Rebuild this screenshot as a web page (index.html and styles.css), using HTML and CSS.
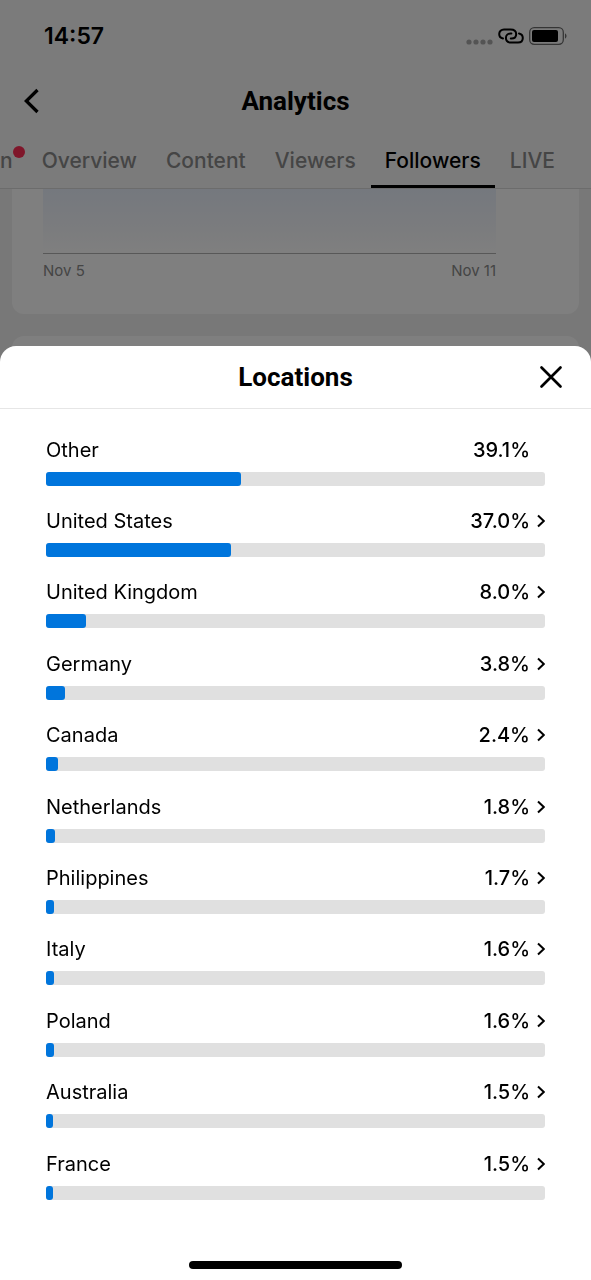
FILE: index.html
```html
<!DOCTYPE html>
<html lang="en">
<head>
<meta charset="utf-8">
<meta name="viewport" content="width=device-width, initial-scale=1">
<title>Analytics</title>
<link rel="stylesheet" href="styles.css">
</head>
<body>
<div class="page">
  <div class="status">
    <time class="clock">14:57</time>
    <div class="status-icons">
      <svg width="27" height="6" viewBox="0 0 27 6" fill="#a9a9a9"><circle cx="3" cy="3" r="2.6"/><circle cx="10" cy="3" r="2.6"/><circle cx="17" cy="3" r="2.6"/><circle cx="24" cy="3" r="2.6"/></svg>
      <svg width="26" height="16" viewBox="0 0 26 16" fill="none" stroke="#000" stroke-width="2" stroke-linecap="round"><path d="M5 10.500C2.600 10 1.200 8.200 1.200 6C1.200 3.200 3.200 1.400 6 1.400H12.500C16 1.400 18.200 3.300 18.200 6C18.200 8.800 16.200 10.600 13.500 10.600H12.800"/><path d="M21 5.500C23.400 6 24.800 7.800 24.800 10C24.800 12.800 22.800 14.600 20 14.600H13.500C10 14.600 7.900 12.800 7.900 10C7.900 7.300 9.900 5.400 12.600 5.400H13.400"/></svg>
      <svg width="38" height="18" viewBox="0 0 38 18"><rect x="0.700" y="0.700" width="33.600" height="16.600" rx="4.500" fill="none" stroke="#6b6b6b" stroke-width="1.300"/><rect x="3" y="3" width="26" height="12" rx="2"/><path d="M36 6.500v5c1-.3 1.500-1.300 1.500-2.500S37 6.800 36 6.500z" fill="#6b6b6b"/></svg>
    </div>
  </div>
  <header class="topbar">
    <button class="icon-button" aria-label="Back"><svg width="16" height="26" viewBox="0 0 16 26" fill="none" stroke="#000" stroke-width="3.300"><path d="M13.500 2L2.300 13L13.500 24"/></svg></button>
    <h1 class="title">Analytics</h1>
  </header>
  <nav class="tabs" role="tablist">
    <button class="tab tab-cut" role="tab"><span class="notify">n<span class="dot"></span></span></button>
    <button class="tab" role="tab">Overview</button>
    <button class="tab" role="tab">Content</button>
    <button class="tab" role="tab">Viewers</button>
    <button class="tab tab-active" role="tab" aria-selected="true">Followers</button>
    <button class="tab" role="tab">LIVE</button>
  </nav>
  <main class="content">
    <section class="card chart-card">
      <div class="chart"></div>
      <div class="axis"><span>Nov 5</span><span>Nov 11</span></div>
    </section>
    <section class="card next-card"></section>
  </main>
</div>

<div class="overlay">
  <section class="sheet" role="dialog" aria-labelledby="sheet-title">
    <header class="sheet-head">
      <h2 class="title" id="sheet-title">Locations</h2>
      <button class="icon-button close" aria-label="Close"><svg width="24" height="24" viewBox="0 0 24 24" fill="none" stroke="#000" stroke-width="2.700" stroke-linecap="round"><path d="M2.500 2.500L21.500 21.500M21.500 2.500L2.500 21.500"/></svg></button>
    </header>
    <div class="list">
      <div class="row"><span class="name">Other</span><span class="value">39.1%</span><div class="track"><div class="fill" style="width:39.1%"></div></div></div>
      <button class="row"><span class="name">United States</span><span class="value">37.0%</span><svg class="chevron" viewBox="0 0 8 14"><path d="M1 1.500L6.800 7L1 12.500"/></svg><div class="track"><div class="fill" style="width:37%"></div></div></button>
      <button class="row"><span class="name">United Kingdom</span><span class="value">8.0%</span><svg class="chevron" viewBox="0 0 8 14"><path d="M1 1.500L6.800 7L1 12.500"/></svg><div class="track"><div class="fill" style="width:8%"></div></div></button>
      <button class="row"><span class="name">Germany</span><span class="value">3.8%</span><svg class="chevron" viewBox="0 0 8 14"><path d="M1 1.500L6.800 7L1 12.500"/></svg><div class="track"><div class="fill" style="width:3.8%"></div></div></button>
      <button class="row"><span class="name">Canada</span><span class="value">2.4%</span><svg class="chevron" viewBox="0 0 8 14"><path d="M1 1.500L6.800 7L1 12.500"/></svg><div class="track"><div class="fill" style="width:2.4%"></div></div></button>
      <button class="row"><span class="name">Netherlands</span><span class="value">1.8%</span><svg class="chevron" viewBox="0 0 8 14"><path d="M1 1.500L6.800 7L1 12.500"/></svg><div class="track"><div class="fill" style="width:1.8%"></div></div></button>
      <button class="row"><span class="name">Philippines</span><span class="value">1.7%</span><svg class="chevron" viewBox="0 0 8 14"><path d="M1 1.500L6.800 7L1 12.500"/></svg><div class="track"><div class="fill" style="width:1.7%"></div></div></button>
      <button class="row"><span class="name">Italy</span><span class="value">1.6%</span><svg class="chevron" viewBox="0 0 8 14"><path d="M1 1.500L6.800 7L1 12.500"/></svg><div class="track"><div class="fill" style="width:1.6%"></div></div></button>
      <button class="row"><span class="name">Poland</span><span class="value">1.6%</span><svg class="chevron" viewBox="0 0 8 14"><path d="M1 1.500L6.800 7L1 12.500"/></svg><div class="track"><div class="fill" style="width:1.6%"></div></div></button>
      <button class="row"><span class="name">Australia</span><span class="value">1.5%</span><svg class="chevron" viewBox="0 0 8 14"><path d="M1 1.500L6.800 7L1 12.500"/></svg><div class="track"><div class="fill" style="width:1.5%"></div></div></button>
      <button class="row"><span class="name">France</span><span class="value">1.5%</span><svg class="chevron" viewBox="0 0 8 14"><path d="M1 1.500L6.800 7L1 12.500"/></svg><div class="track"><div class="fill" style="width:1.5%"></div></div></button>
    </div>
    <div class="home-indicator"></div>
  </section>
</div>
</body>
</html>
```

FILE: styles.css
```css
* { box-sizing: border-box; }

body {
  margin: 0;
  background: #f1f1f1;
  color: #000;
  font-family: Inter, Roboto, sans-serif;
}

button {
  margin: 0;
  padding: 0;
  border: 0;
  background: none;
  color: inherit;
  font: inherit;
  text-align: left;
}

svg { display: block; flex: none; }

.page {
  display: flex;
  flex-direction: column;
  min-height: 100vh;
}

.status {
  display: flex;
  align-items: center;
  justify-content: space-between;
  height: 71px;
  padding: 0 24px 0 44px;
  background: #f7f7f7;
}

.clock { font-size: 23px; font-weight: 600; }

.status-icons { display: flex; align-items: center; gap: 5px; }
.status-icons svg:first-child { align-self: flex-end; }

.topbar {
  display: grid;
  grid-template-columns: 40px 1fr 40px;
  align-items: center;
  height: 59px;
  padding: 0 24px;
  background: #f7f7f7;
}

.title {
  margin: 0;
  font-family: Roboto, sans-serif;
  font-size: 26px;
  font-weight: 700;
  line-height: 32px;
  text-align: center;
}

.tabs {
  display: flex;
  gap: 1px;
  height: 59px;
  overflow: hidden;
  border-bottom: 1px solid #d8d8d8;
  background: #f7f7f7;
}

.tab {
  flex: none;
  padding: 6px 14px 0;
  border-bottom: 3px solid transparent;
  color: #8a8a8a;
  font-size: 21px;
  font-weight: 500;
}

.tab-cut { padding-left: 0; }
.tab-active { border-color: #000; color: #000; }

.notify { position: relative; }

.dot {
  position: absolute;
  top: -2px;
  left: 100%;
  width: 12px;
  height: 12px;
  border-radius: 50%;
  background: #fe2c55;
}

.content {
  display: flex;
  flex: 1;
  flex-direction: column;
  gap: 22px;
  padding: 0 12px;
}

.card { border-radius: 12px; background: #fff; }

.chart-card {
  padding: 0 83px 32px 31px;
  border-radius: 0 0 12px 12px;
}

.chart {
  height: 65px;
  border-bottom: 1px solid #b0b0b0;
  background: linear-gradient(#eaf1fc, #f6f8fc 60%, #fff);
}

.axis {
  display: flex;
  justify-content: space-between;
  padding-top: 6px;
  color: #8a8a8a;
  font-size: 15px;
  line-height: 22px;
}

.next-card { flex: 1; }

.overlay {
  position: fixed;
  inset: 0;
  display: flex;
  flex-direction: column;
  justify-content: flex-end;
  background: rgba(0, 0, 0, 0.5);
}

.sheet {
  display: flex;
  flex-direction: column;
  min-height: 73vh;
  border-radius: 16px 16px 0 0;
  background: #fff;
}

.sheet-head {
  display: grid;
  grid-template-columns: 40px 1fr 40px;
  align-items: center;
  height: 63px;
  padding: 0 28px;
  border-bottom: 1px solid #e6e6e6;
}

.sheet-head .title { grid-column: 2; }
.close { justify-self: end; }

.list {
  display: grid;
  flex: 1;
  grid-auto-rows: 1fr;
  padding: 26px 46px 0;
}

.row {
  display: grid;
  grid-template-columns: 1fr auto 15px;
  grid-template-rows: 30px 14px;
  row-gap: 7px;
  align-items: center;
  font-size: 20px;
  line-height: 30px;
}

.value { font-weight: 500; }

.chevron {
  justify-self: end;
  width: 8px;
  height: 14px;
  fill: none;
  stroke: #000;
  stroke-width: 2;
}

.track {
  grid-column: 1 / -1;
  height: 14px;
  border-radius: 3px;
  background: #e0e0e0;
}

.fill {
  height: 100%;
  border-radius: 3px;
  background: #0075dc;
}

.home-indicator {
  align-self: center;
  width: 36%;
  height: 8px;
  margin: 41px 0 11px;
  border-radius: 4px;
  background: #000;
}
```
